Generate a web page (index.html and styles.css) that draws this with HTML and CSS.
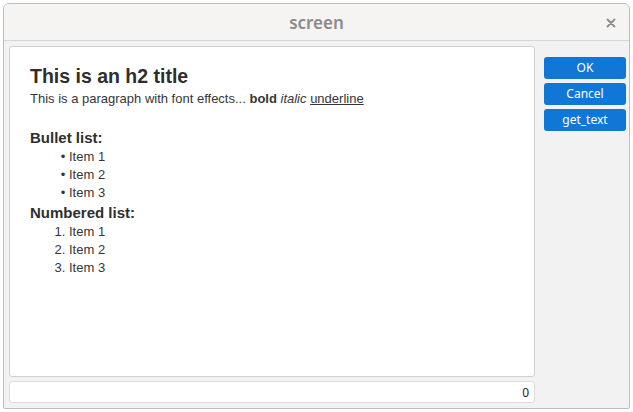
FILE: index.html
```html
<!DOCTYPE html>
<html>
<head>
<meta charset="utf-8">
<title>screen</title>
<link rel="stylesheet" href="styles.css">
</head>
<body>
<div class="window">
  <div class="titlebar">
    <span class="title">screen</span>
    <span class="close">
      <svg width="10" height="10" viewBox="0 0 10 10"><path d="M1.5 1.5 L8.5 8.5 M8.5 1.5 L1.5 8.5" stroke="#8c8c8c" stroke-width="1.8" stroke-linecap="round"/></svg>
    </span>
  </div>
  <div class="body">
    <div class="main">
      <div class="panel">
        <h2 class="h2">This is an h2 title</h2>
        <p class="para">This is a paragraph with font effects... <b>bold</b> <i>italic</i> <u>underline</u></p>
        <h3 class="h3 first">Bullet list:</h3>
        <ul class="bullets">
          <li>Item 1</li>
          <li>Item 2</li>
          <li>Item 3</li>
        </ul>
        <h3 class="h3 second">Numbered list:</h3>
        <ol class="numbers">
          <li>Item 1</li>
          <li>Item 2</li>
          <li>Item 3</li>
        </ol>
      </div>
      <div class="status">0</div>
    </div>
    <div class="side">
      <button class="btn">OK</button>
      <button class="btn">Cancel</button>
      <button class="btn">get_text</button>
    </div>
  </div>
</div>
</body>
</html>
```

FILE: styles.css
```css
html, body {
  margin: 0;
  padding: 0;
  background: #ffffff;
}
body {
  padding: 3px;
  width: 633px;
  height: 412px;
  box-sizing: border-box;
}
.window {
  width: 627px;
  height: 406px;
  box-sizing: border-box;
  border: 1px solid #bdbdbd;
  border-radius: 6px 6px 2px 2px;
  background: #f2f2f2;
  display: flex;
  flex-direction: column;
  overflow: hidden;
}
.titlebar {
  height: 37px;
  flex: none;
  box-sizing: border-box;
  border-bottom: 1px solid #d6d6d6;
  background: #f5f4f3;
  display: flex;
  align-items: center;
  justify-content: center;
  position: relative;
}
.title {
  font-family: "Noto Sans", sans-serif;
  font-weight: 600;
  font-size: 17px;
  color: #8a8a8a;
  margin-top: 1px;
}
.close {
  position: absolute;
  right: 13px;
  top: 14px;
  width: 10px;
  height: 10px;
  display: flex;
}
.body {
  flex: 1;
  display: flex;
  padding: 5px 3px 5px 5px;
  gap: 9px;
  min-height: 0;
}
.main {
  width: 526px;
  display: flex;
  flex-direction: column;
  gap: 4px;
}
.panel {
  flex: 1;
  box-sizing: border-box;
  background: #ffffff;
  border: 1px solid #d0d0d0;
  border-radius: 3px;
  padding: 16px 20px;
  font-family: "Liberation Sans", Arial, sans-serif;
  color: #363636;
}
.h2 {
  margin: 0;
  font-size: 19.5px;
  line-height: 27px;
  font-weight: bold;
  color: #2e2e2e;
}
.para {
  margin: 0;
  font-size: 13px;
  line-height: 18px;
}
.h3 {
  margin: 0;
  font-size: 15px;
  line-height: 20px;
  font-weight: bold;
  color: #2e2e2e;
}
.h3.first { margin-top: 20px; }
.h3.second { margin-top: 1px; }
.bullets, .numbers {
  margin: 0;
  padding-left: 39px;
  font-size: 13px;
  line-height: 18px;
}
.bullets { list-style-type: "\2022  "; }
.numbers { list-style-type: decimal; }
.status {
  height: 22px;
  flex: none;
  box-sizing: border-box;
  background: #ffffff;
  border: 1px solid #dcdcdc;
  border-radius: 3px;
  font-family: "Noto Sans", sans-serif;
  font-size: 12px;
  color: #222;
  text-align: right;
  padding: 0 5px 0 6px;
  line-height: 21px;
}
.side {
  width: 82px;
  display: flex;
  flex-direction: column;
  gap: 4px;
  padding-top: 11px;
}
.btn {
  height: 22px;
  border: none;
  border-radius: 3px;
  background: #1177d6;
  color: #ffffff;
  font-family: "Noto Sans", sans-serif;
  font-size: 12px;
  padding: 0;
  line-height: 22px;
}
```
